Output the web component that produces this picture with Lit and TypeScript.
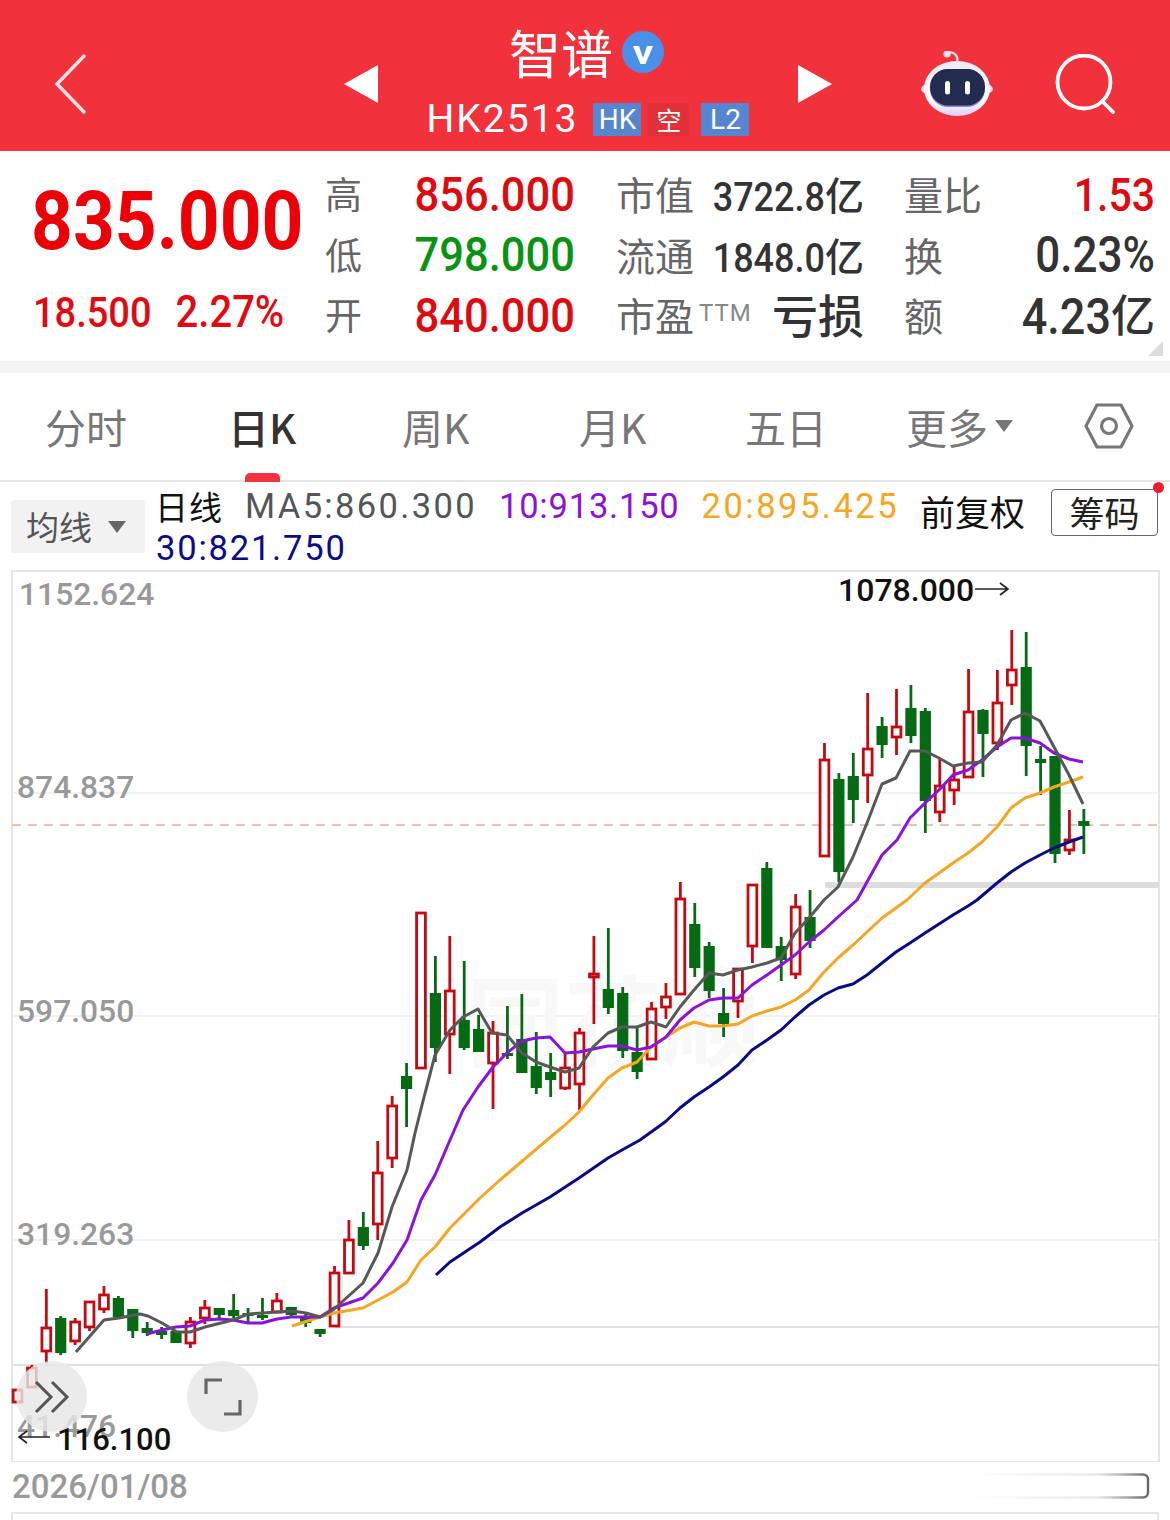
import { LitElement, html, css, svg } from "lit";
import { customElement } from "lit/decorators.js";

// [kind, high, bodyTop, bodyBottom, low]
const C: [string, number, number, number, number][] = [
  ["r",1390,1390,1402,1402],["r",1365,1368,1387,1387],["r",1289,1328,1351,1363],["g",1316,1318,1353,1355],
  ["r",1318,1322,1341,1345],["r",1302,1302,1327,1331],["r",1286,1295,1309,1313],["g",1296,1298,1317,1319],
  ["g",1309,1309,1331,1338],["g",1322,1328,1333,1336],["g",1327,1331,1335,1339],["g",1331,1331,1343,1343],
  ["r",1317,1322,1343,1348],["r",1300,1308,1318,1324],["g",1308,1308,1315,1319],["g",1294,1310,1316,1318],
  ["g",1308,1313,1316,1322],["g",1298,1315,1317,1320],["r",1293,1301,1312,1312],["g",1307,1307,1315,1317],
  ["g",1312,1318,1323,1327],["g",1329,1329,1334,1337],["r",1266,1273,1326,1326],["r",1220,1240,1273,1273],
  ["g",1212,1227,1246,1250],["r",1141,1173,1224,1240],["r",1096,1106,1158,1168],["g",1063,1076,1089,1127],
  ["r",913,913,1068,1068],["g",956,993,1048,1062],["r",936,991,1034,1074],["g",961,1020,1048,1050],
  ["g",1015,1029,1052,1052],["r",1021,1033,1063,1109],["g",1006,1053,1055,1059],["g",994,1039,1073,1073],
  ["g",1032,1066,1088,1094],["g",1053,1072,1080,1097],["r",1053,1068,1088,1090],["r",1028,1033,1084,1110],
  ["r",936,974,977,1024],["g",928,989,1008,1014],["g",987,993,1051,1058],["g",1028,1052,1072,1079],
  ["r",1002,1009,1059,1059],["r",983,997,1007,1019],["r",882,899,994,994],["g",903,924,968,977],
  ["g",942,946,991,998],["g",988,1013,1024,1037],["r",968,969,1001,1018],["r",885,885,946,963],
  ["g",862,868,948,948],["g",937,946,960,981],["r",894,907,974,979],["g",890,917,941,948],
  ["r",743,760,856,856],["g",773,779,872,882],["g",753,776,800,823],["r",693,749,775,803],
  ["g",717,726,745,758],["r",689,727,737,755],["g",685,708,736,743],["g",708,711,801,833],
  ["r",758,786,812,822],["r",767,780,790,805],["r",669,712,777,777],["g",709,710,734,777],
  ["r",670,703,743,750],["r",630,670,685,705],["g",632,667,746,776],["g",746,759,763,795],
  ["g",756,756,854,863],["r",810,840,850,855],["g",809,821,826,854],
];

const MA5 = "76,1352 104,1320 119,1318 140,1314 148,1316 162,1323 177,1332 190,1332 205,1327 233,1320 248,1314 263,1313 277,1312 292,1311 306,1313 320,1317 333,1310 363,1283 378,1253 392,1207 407,1170 415,1133 422,1105 435,1055 450,1030 463,1017 478,1009 492,1033 507,1035 522,1053 536,1062 550,1067 565,1072 579,1068 593,1047 608,1033 622,1027 637,1027 651,1022 666,1027 680,1007 694,990 709,973 723,975 738,970 752,967 767,963 781,958 795,933 809,918 824,900 838,887 853,857 867,823 882,784 896,778 910,751 925,751 939,758 953,766 968,763 982,762 997,745 1011,720 1025,713 1040,721 1054,747 1069,775 1083,804";
const MA10 = "147,1334 162,1330 176,1327 190,1326 205,1320 219,1319 233,1320 248,1323 262,1323 277,1319 291,1317 305,1317 320,1317 334,1308 363,1298 378,1283 393,1263 407,1240 421,1200 435,1175 450,1140 463,1110 478,1087 493,1067 507,1053 522,1041 536,1038 550,1037 565,1053 579,1052 593,1049 608,1046 622,1046 637,1050 651,1047 666,1037 680,1020 694,1008 709,1000 723,998 738,998 752,985 767,975 781,965 795,955 809,942 824,930 838,917 857,900 882,855 897,840 910,818 925,803 939,790 953,775 968,770 982,760 997,747 1011,738 1025,738 1040,743 1054,753 1069,759 1083,762";
const MA20 = "292,1326 320,1317 334,1313 363,1308 378,1300 393,1292 407,1282 421,1260 435,1247 450,1228 465,1213 480,1198 500,1180 547,1140 565,1125 579,1112 593,1095 608,1078 622,1068 637,1062 651,1047 666,1037 680,1028 694,1022 709,1026 723,1026 738,1024 752,1016 767,1011 781,1007 795,1000 809,990 824,972 838,958 853,945 867,932 882,918 896,908 907,900 925,883 939,873 953,863 968,853 982,842 997,827 1011,808 1025,798 1040,793 1054,787 1069,782 1083,777";
const MA30 = "436,1275 450,1262 465,1252 480,1242 500,1227 522,1213 550,1197 579,1178 608,1158 622,1150 640,1140 665,1122 680,1108 694,1097 709,1087 723,1077 738,1065 752,1050 767,1040 781,1030 795,1017 809,1005 824,995 838,988 853,984 867,975 882,963 896,952 910,943 925,933 939,924 953,915 968,906 977,900 997,883 1011,872 1025,863 1040,855 1054,848 1069,842 1083,837";

const RED = "#c40a10";
const GREEN = "#066a14";

@customElement("app-root")
export class AppRoot extends LitElement {
  static styles = css`
    :host { display: block; width: 1170px; height: 1520px; overflow: hidden; background: #fff;
      font-family: Roboto, "Noto Sans CJK SC", sans-serif; color: #333; }
    svg { display: block; }
    .din { display: inline-block; transform: scaleY(1.12); font-family: Roboto, sans-serif; }

    header { height: 151px; background: #f1323d; color: #fff; display: grid; align-items: center;
      grid-template-columns: 290px 34px 420px 123px 134px auto; padding-left: 54px; box-sizing: border-box; }
    .hi { margin-top: 16px; }
    .title { align-self: start; display: flex; flex-direction: column; align-items: center; padding-top: 26px; }
    .name { display: flex; align-items: center; gap: 9px; height: 52px; font: 400 52px/52px "Noto Sans CJK SC", sans-serif; margin-left: -3px; }
    .sub { display: flex; align-items: center; margin-top: 25px; height: 33px; }
    .code { font-size: 39px; letter-spacing: 2px; margin-right: 15px; line-height: 33px; }
    .tag { height: 33px; box-sizing: border-box; font-size: 28px; line-height: 33px; text-align: center; }
    .tag.b { width: 48px; background: #5686cf; }
    .tag.k { width: 41px; margin: 0 12px 0 7px; background: #e0303a; font: 400 25px/33px "Noto Sans CJK SC", sans-serif; }

    .quote { height: 210px; box-sizing: border-box; padding: 15px 0 0 31px; display: flex; position: relative; }
    .left { width: 294px; }
    .big { font-size: 73px; font-weight: 700; color: #ea0006; line-height: 78px; margin-top: 16px; }
    .chg { display: flex; gap: 24px; margin-top: 32px; padding-left: 2px; font-size: 38px; font-weight: 500; color: #e00a10; line-height: 40px; }
    .chg .p { font-size: 40px; }
    .qc { display: grid; grid-auto-rows: 60.5px; align-items: center; font-family: "Noto Sans CJK SC", sans-serif; }
    .qc1 { grid-template-columns: 37px 213px; }
    .qc2 { grid-template-columns: 70px 178px; margin-left: 41px; }
    .qc3 { grid-template-columns: 80px 171px; margin-left: 40px; }
    .l { font-size: 37px; color: #666; line-height: 44px; white-space: nowrap; margin-top: -6px; }
    .qc2 .l, .qc3 .l { font-size: 39px; }
    .ttm { font: 400 24px/24px Roboto, sans-serif; color: #888; vertical-align: 10px; margin-left: 5px; letter-spacing: 1px; }
    .v { text-align: right; white-space: nowrap; line-height: 44px; margin-top: 4px; }
    .v .din { font-size: 43.5px; font-weight: 500; }
    .re { color: #de0a10; }
    .gr { color: #089313; }
    .v.s .din { font-size: 36px; font-weight: 500; color: #333; }
    .yi { font-size: 39px; color: #333; font-weight: 500; }
    .v.m .din { font-size: 41px; font-weight: 500; color: #de0a10; }
    .v.m2 .din { font-size: 44px; font-weight: 500; color: #333; }
    .v.m3 .din { font-size: 45px; font-weight: 500; color: #333; }
    .v.m3 .yi { font-size: 44px; }
    .loss { font-size: 46px; font-weight: 500; color: #333; line-height: 44px; }
    .corner { position: absolute; right: 7px; bottom: 5px; width: 0; height: 0; border-style: solid; border-width: 0 0 15px 15px; border-color: transparent transparent #dcdcdc transparent; }
    .band { height: 12px; background: #f4f4f4; }

    .tabs { height: 109px; box-sizing: border-box; padding: 0 0 0 45px; border-bottom: 2px solid #e6e6e6; position: relative;
      display: grid; grid-template-columns: 183px 174px 177px 166px 161px 178px auto; align-items: center;
      font: 400 41px/48px "Noto Sans CJK SC", sans-serif; color: #777; }
    .tab { display: flex; align-items: center; white-space: nowrap; position: relative; margin-top: -2px; }
    .tab.on { color: #333; font-weight: 500; }
    .pill { position: absolute; left: 17px; top: 71px; width: 35px; height: 9px; border-radius: 5px 5px 0 0; background: #f2323f; }
    .more { margin-left: 7px; width: 0; height: 0; border-style: solid; border-width: 12px 9.5px 0 9.5px; border-color: #777 transparent transparent transparent; }
    .gear { margin-top: -2px; }

    .legend { height: 88px; box-sizing: border-box; position: relative; display: flex; padding-left: 11px; }
    .pick { margin-top: 18px; width: 134px; height: 53px; border-radius: 4px; background: #f2f2f2; display: flex; align-items: center;
      padding-left: 15px; box-sizing: border-box; font: 400 33px/53px "Noto Sans CJK SC", sans-serif; color: #555; }
    .pick i { margin-left: 16px; width: 0; height: 0; border-style: solid; border-width: 12px 9.5px 0 9.5px; border-color: #666 transparent transparent transparent; }
    .ma { width: 765px; margin-left: 11px; padding-top: 3px; display: flex; flex-wrap: wrap; align-content: flex-start; column-gap: 22px; font-size: 34.5px; line-height: 42px; white-space: nowrap; }
    .ma .d { font: 400 33px/42px "Noto Sans CJK SC", sans-serif; color: #111; margin-left: -1px; letter-spacing: 1px; }
    .m5 { color: #555; letter-spacing: 2.35px; }
    .m10 { color: #8b12dc; letter-spacing: .8px; }
    .m20 { color: #f5a623; letter-spacing: 2.5px; }
    .m30 { color: #0a0a8a; letter-spacing: 1.8px; }
    .adj { font: 400 35px/46px "Noto Sans CJK SC", sans-serif; color: #111; margin: 6px 0 0 -1px; width: 131px; white-space: nowrap; }
    .chip { width: 107px; height: 47px; margin-top: 7px; box-sizing: border-box; border: 1.5px solid #666; border-radius: 4px; text-align: center;
      font: 400 35px/43px "Noto Sans CJK SC", sans-serif; color: #222; position: relative; }
    .chip::after { content: ""; position: absolute; right: -7px; top: -8px; width: 11px; height: 11px; border-radius: 50%; background: #ef1c30; }

    .chart { position: relative; height: 892px; }
    .chart text { font-family: Roboto, sans-serif; }
    .yl { font-size: 31.8px; fill: #999; font-weight: 500; }
    .mark { font-size: 32px; fill: #111; font-weight: 500; }
    .mark.n { font-size: 31px; }
    .wm { font-family: "Noto Sans CJK SC", sans-serif !important; font-size: 98px; font-weight: 700; fill: #f8f8f8; }
    .fab { position: absolute; width: 71px; height: 71px; top: 791px; border-radius: 50%; background: rgba(230,230,230,.82); display: flex; align-items: center; justify-content: center; }
    .fab.a { left: 16px; }
    .fab.b { left: 187px; }

    .dates { height: 50px; padding-left: 12px; display: flex; align-items: center; justify-content: space-between; box-sizing: border-box; }
    .date { font-size: 33px; color: #999; font-weight: 500; margin-top: -2px; }
    .scroll { margin-right: 20px; margin-top: -2px; }
    .below { margin: 0 11px; height: 8px; border: 2px solid #e6e6e6; border-bottom: 0; box-sizing: border-box; }
  `;

  private candles() {
    return C.map(([k, hi, top, bot, lo], i) => {
      const x = 17.5 + 14.41 * i;
      const col = k === "r" ? RED : GREEN;
      return svg`
        ${hi < top ? svg`<line x1=${x} x2=${x} y1=${hi} y2=${top} stroke=${col} stroke-width="2.8"/>` : ""}
        ${lo > bot ? svg`<line x1=${x} x2=${x} y1=${bot} y2=${lo} stroke=${col} stroke-width="2.8"/>` : ""}
        ${k === "r"
          ? svg`<rect x=${x - 4.4} y=${top} width="8.8" height=${Math.max(bot - top, 2)} fill="#fff" stroke=${col} stroke-width="2.8"/>`
          : svg`<rect x=${x - 5.6} y=${top} width="11.2" height=${Math.max(bot - top, 3)} fill=${col}/>`}
      `;
    });
  }

  private robot() {
    return html`<svg width="72" height="66" viewBox="921 50 72 66">
      <defs>
        <linearGradient id="rh" x1="0" y1="0" x2="0" y2="1"><stop offset="0" stop-color="#efe9f8"/><stop offset=".7" stop-color="#ffffff"/><stop offset="1" stop-color="#dcd0f5"/></linearGradient>
      </defs>
      <path d="M947 52 C953 50 959 54 957 61" fill="none" stroke="#f3e6ee" stroke-width="2.2"/>
      <circle cx="947" cy="53" r="3.6" fill="#f6dfe6"/>
      <ellipse cx="957" cy="88" rx="36" ry="10" fill="#e6def6"/>
      <ellipse cx="957" cy="87.5" rx="33" ry="27.5" fill="url(#rh)"/>
      <rect x="930" y="68" width="55" height="38" rx="18" fill="#8f7fe0"/>
      <rect x="930" y="68" width="55" height="36.5" rx="18" fill="#212c4f"/>
      <rect x="945" y="80" width="5" height="13.5" rx="2.5" fill="#fff"/>
      <rect x="965" y="80" width="5" height="13.5" rx="2.5" fill="#fff"/>
    </svg>`;
  }

  render() {
    return html`
      <header>
        <svg class="hi" width="32" height="60" viewBox="0 0 32 60"><path d="M30 2 L3 30 L30 58" fill="none" stroke="#fbe3e4" stroke-width="3.4" stroke-linecap="round" stroke-linejoin="round"/></svg>
        <svg class="hi" width="34" height="38" viewBox="0 0 34 38"><path d="M34 0 V38 L0 19 Z" fill="#fff"/></svg>
        <div class="title">
          <div class="name">智谱
            <svg width="42" height="42" viewBox="0 0 42 42"><circle cx="21" cy="21" r="21" fill="#4a90e6"/><path d="M11 15 h6 l4 12 l4 -12 h6 l-7.5 18 h-5 Z" fill="#fff"/></svg>
          </div>
          <div class="sub"><span class="code">HK2513</span><span class="tag b">HK</span><span class="tag k">空</span><span class="tag b">L2</span></div>
        </div>
        <svg class="hi" width="34" height="38" viewBox="0 0 34 38"><path d="M0 0 V38 L34 19 Z" fill="#fff"/></svg>
        <div class="hi">${this.robot()}</div>
        <svg class="hi" width="60" height="60" viewBox="0 0 60 60"><circle cx="29" cy="28" r="26.5" fill="none" stroke="#fff" stroke-width="3.8"/><path d="M47 47 L58 58" stroke="#fff" stroke-width="3.8" stroke-linecap="round"/></svg>
      </header>

      <section class="quote">
        <div class="left">
          <div class="big din">835.000</div>
          <div class="chg"><span class="din">18.500</span><span class="din p">2.27%</span></div>
        </div>
        <div class="qc qc1">
          <span class="l">高</span><span class="v"><span class="din re">856.000</span></span>
          <span class="l">低</span><span class="v"><span class="din gr">798.000</span></span>
          <span class="l">开</span><span class="v"><span class="din re">840.000</span></span>
        </div>
        <div class="qc qc2">
          <span class="l">市值</span><span class="v s"><span class="din">3722.8</span><span class="yi">亿</span></span>
          <span class="l">流通</span><span class="v s"><span class="din">1848.0</span><span class="yi">亿</span></span>
          <span class="l">市盈<span class="ttm">TTM</span></span><span class="v"><span class="loss">亏损</span></span>
        </div>
        <div class="qc qc3">
          <span class="l">量比</span><span class="v m"><span class="din">1.53</span></span>
          <span class="l">换</span><span class="v m2"><span class="din">0.23%</span></span>
          <span class="l">额</span><span class="v m3"><span class="din">4.23</span><span class="yi">亿</span></span>
        </div>
        <div class="corner"></div>
      </section>
      <div class="band"></div>

      <nav class="tabs">
        <div class="tab">分时</div>
        <div class="tab on">日K<span class="pill"></span></div>
        <div class="tab">周K</div>
        <div class="tab">月K</div>
        <div class="tab">五日</div>
        <div class="tab">更多<i class="more"></i></div>
        <svg class="gear" width="50" height="46" viewBox="0 0 50 46"><path d="M13 2 H37 L48 23 L37 44 H13 L2 23 Z" fill="none" stroke="#777" stroke-width="3.2" stroke-linejoin="round"/><circle cx="25" cy="23" r="7.5" fill="none" stroke="#777" stroke-width="3.2"/></svg>
      </nav>

      <div class="legend">
        <div class="pick">均线<i></i></div>
        <div class="ma">
          <span class="d">日线</span><span class="m5">MA5:860.300</span><span class="m10">10:913.150</span><span class="m20">20:895.425</span><span class="m30">30:821.750</span>
        </div>
        <div class="adj">前复权</div>
        <div class="chip">筹码</div>
      </div>

      <div class="chart">
        <svg width="1170" height="892" viewBox="0 570 1170 892">
          <rect x="12" y="571" width="1147" height="891" fill="#fff" stroke="#e6e6e6" stroke-width="2"/>
          <line x1="12" x2="1159" y1="793" y2="793" stroke="#ececec" stroke-width="1.5"/>
          <line x1="12" x2="1159" y1="1016" y2="1016" stroke="#ececec" stroke-width="1.5"/>
          <line x1="12" x2="1159" y1="1240" y2="1240" stroke="#ececec" stroke-width="1.5"/>
          <line x1="334" x2="1159" y1="1327" y2="1327" stroke="#e0e0e0" stroke-width="2"/>
          <line x1="12" x2="1159" y1="1365" y2="1365" stroke="#e0e0e0" stroke-width="2"/>
          <line x1="825" x2="1159" y1="885" y2="885" stroke="#dcdcdc" stroke-width="6"/>
          <line x1="12" x2="1159" y1="825" y2="825" stroke="#dcb79a" stroke-width="1.5" stroke-dasharray="9 7"/>
          <text class="wm" x="466" y="1058">同花顺</text>
          <text class="yl" x="19" y="605">1152.624</text>
          <text class="yl" x="17" y="798">874.837</text>
          <text class="yl" x="17" y="1022">597.050</text>
          <text class="yl" x="17" y="1245">319.263</text>
          <text class="yl" x="17" y="1437">41.476</text>
          ${this.candles()}
          <polyline points=${MA30} fill="none" stroke="#0a0a85" stroke-width="3" stroke-linejoin="round"/>
          <polyline points=${MA20} fill="none" stroke="#f5a623" stroke-width="3" stroke-linejoin="round"/>
          <polyline points=${MA10} fill="none" stroke="#8b12dc" stroke-width="3" stroke-linejoin="round"/>
          <polyline points=${MA5} fill="none" stroke="#585858" stroke-width="3" stroke-linejoin="round"/>
          <text class="mark" x="838" y="601">1078.000</text>
          <path d="M975 589 H1008 M1000 583 L1008 589 L1000 595" fill="none" stroke="#222" stroke-width="1.6"/>
          <text class="mark n" x="57" y="1450">116.100</text>
          <path d="M19 1437 H50 M27 1431 L19 1437 L27 1443" fill="none" stroke="#222" stroke-width="1.6"/>
        </svg>
        <div class="fab a"><svg width="36" height="36" viewBox="0 0 36 36"><path d="M2 3 L17 18 L2 33 M18 3 L33 18 L18 33" fill="none" stroke="#555" stroke-width="3"/></svg></div>
        <div class="fab b"><svg width="38" height="38" viewBox="0 0 38 38"><path d="M2 16 V2 H18 M36 22 V36 H20" fill="none" stroke="#666" stroke-width="3.2"/></svg></div>
      </div>

      <div class="dates">
        <span class="date">2026/01/08</span>
        <svg class="scroll" width="180" height="26" viewBox="0 0 180 26">
          <defs><linearGradient id="sb"><stop offset="0" stop-color="#999" stop-opacity="0"/><stop offset=".7" stop-color="#aaa" stop-opacity=".25"/><stop offset="1" stop-color="#666"/></linearGradient></defs>
          <rect x="1" y="1.5" width="177" height="23" rx="5" fill="none" stroke="url(#sb)" stroke-width="2.4"/>
        </svg>
      </div>
      <div class="below"></div>
    `;
  }
}
